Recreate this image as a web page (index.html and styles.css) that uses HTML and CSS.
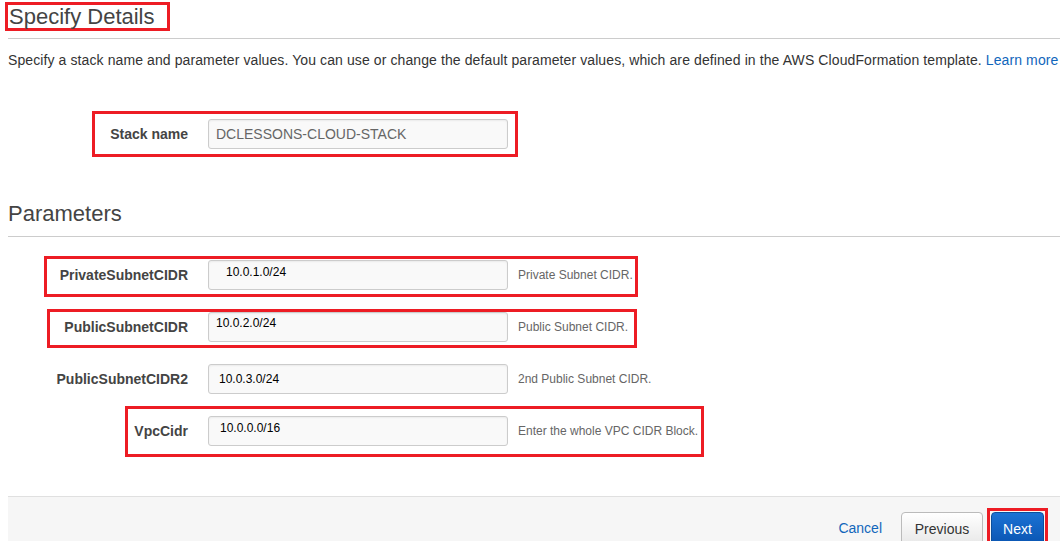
FILE: index.html
```html
<!DOCTYPE html>
<html lang="en">
<head>
    <meta charset="UTF-8">
    <meta name="viewport" content="width=device-width, initial-scale=1.0">
    <title>Specify Details</title>
    <link rel="stylesheet" href="styles.css">
</head>
<body>
    <div class="page">
        <div class="title-wrap">
            <h1 class="title mark-title">Specify Details</h1>
        </div>
        <hr class="rule">
        <p class="intro">Specify a stack name and parameter values. You can use or change the default parameter values, which are defined in the AWS CloudFormation template. <a href="#">Learn more</a></p>

        <div class="row row-stack">
            <span class="mark mark-stack"></span>
            <label class="label">Stack name</label>
            <input class="field field-stack" type="text" value="DCLESSONS-CLOUD-STACK">
        </div>

        <h2 class="section">Parameters</h2>
        <hr class="rule rule-params">

        <div class="row">
            <span class="mark mark-private"></span>
            <label class="label">PrivateSubnetCIDR</label>
            <input class="field field-private" type="text" value="10.0.1.0/24">
            <span class="help">Private Subnet CIDR.</span>
        </div>
        <div class="row">
            <span class="mark mark-public"></span>
            <label class="label">PublicSubnetCIDR</label>
            <input class="field field-public" type="text" value="10.0.2.0/24">
            <span class="help">Public Subnet CIDR.</span>
        </div>
        <div class="row">
            <label class="label">PublicSubnetCIDR2</label>
            <input class="field field-public2" type="text" value="10.0.3.0/24">
            <span class="help">2nd Public Subnet CIDR.</span>
        </div>
        <div class="row">
            <span class="mark mark-vpc"></span>
            <label class="label">VpcCidr</label>
            <input class="field field-vpc" type="text" value="10.0.0.0/16">
            <span class="help">Enter the whole VPC CIDR Block.</span>
        </div>

        <div class="footer">
            <a class="cancel" href="#">Cancel</a>
            <button class="btn btn-prev">Previous</button>
            <span class="mark-next"><button class="btn btn-next">Next</button></span>
        </div>
    </div>
</body>
</html>
```

FILE: styles.css
```css
html, body {
    margin: 0;
    padding: 0;
    background: #fff;
    overflow: hidden;
}
body {
    font-family: Arial, "Liberation Sans", sans-serif;
    color: #333;
}
.page {
    padding-left: 8px;
    height: 541px;
    overflow: hidden;
}
.title-wrap {
    padding-top: 2px;
    margin-left: -3px;
}
.title {
    display: inline-block;
    margin: 0;
    font-size: 22px;
    font-weight: normal;
    line-height: 23px;
    color: #444;
    padding: 0 12px 0 1px;
}
.mark-title {
    border: 3px solid #ed1c24;
}
.rule {
    border: 0;
    border-top: 1px solid #ccc;
    margin: 7px 0 0 0;
}
.intro {
    margin: 13px 0 0 0;
    font-size: 14px;
    letter-spacing: 0.1px;
    line-height: 16px;
    color: #333;
    white-space: nowrap;
}
.intro a {
    color: #1166bb;
    text-decoration: none;
}
.row {
    position: relative;
    display: flex;
    align-items: center;
    height: 30px;
    margin-bottom: 22px;
}
.row-stack {
    margin-top: 51px;
    margin-bottom: 0;
}
.label {
    width: 200px;
    padding-right: 20px;
    box-sizing: border-box;
    text-align: right;
    font-size: 14px;
    font-weight: bold;
    color: #444;
    position: relative;
}
.field {
    width: 300px;
    height: 30px;
    box-sizing: border-box;
    border: 1px solid #ccc;
    border-radius: 3px;
    background: #f9f9f9;
    box-shadow: inset 0 1px 2px rgba(0, 0, 0, 0.06);
    font-family: Arial, "Liberation Sans", sans-serif;
    font-size: 12px;
    color: #000;
    padding: 0 0 0 10px;
    margin: 0;
    position: relative;
}
.field-stack {
    font-size: 14px;
    color: #666;
    padding-left: 7px;
}
.field-private {
    padding-left: 17px;
    padding-bottom: 6px;
}
.field-public {
    padding-left: 7px;
    padding-bottom: 8px;
}
.field-public2 {
    padding-left: 10px;
}
.field-vpc {
    padding-left: 11px;
    padding-bottom: 6px;
}
.help {
    margin-left: 10px;
    font-size: 12px;
    color: #666;
    position: relative;
}
.mark {
    position: absolute;
    border: 3px solid #ed1c24;
    box-sizing: border-box;
}
.mark-stack {
    left: 84px;
    top: -8px;
    width: 426px;
    height: 46px;
}
.mark-private {
    left: 36px;
    top: -4px;
    width: 594px;
    height: 41px;
}
.mark-public {
    left: 39px;
    top: -3px;
    width: 590px;
    height: 39px;
}
.mark-vpc {
    left: 117px;
    top: -10px;
    width: 579px;
    height: 51px;
}
.section {
    margin: 52px 0 0 0;
    font-size: 22px;
    font-weight: normal;
    line-height: 26px;
    color: #444;
}
.rule-params {
    margin-top: 9px;
    margin-bottom: 23px;
}
.footer {
    margin-top: 50px;
    border-top: 1px solid #e0e0e0;
    background: #f6f6f6;
    height: 45px;
    box-sizing: border-box;
    display: flex;
    justify-content: flex-end;
    align-items: flex-start;
    padding: 15px 12px 0 0;
    overflow: hidden;
}
.cancel {
    color: #1166bb;
    text-decoration: none;
    font-size: 14px;
    margin-top: 8px;
    margin-right: 19px;
}
.btn {
    font-family: Arial, "Liberation Sans", sans-serif;
    font-size: 14px;
    height: 33px;
    border-radius: 4px;
    cursor: pointer;
}
.btn-prev {
    width: 82px;
    color: #333;
    border: 1px solid #bbb;
    background: linear-gradient(#ffffff, #e8e8e8);
    margin-right: 4px;
}
.mark-next {
    display: flex;
    border: 3px solid #ed1c24;
    padding: 1px 1px 0 1px;
    margin-top: -4px;
}
.btn-next {
    width: 53px;
    color: #fff;
    border: 1px solid #0b4f9c;
    background: linear-gradient(#1b72d4, #0a55b2);
    border-radius: 4px 4px 0 0;
}
```
